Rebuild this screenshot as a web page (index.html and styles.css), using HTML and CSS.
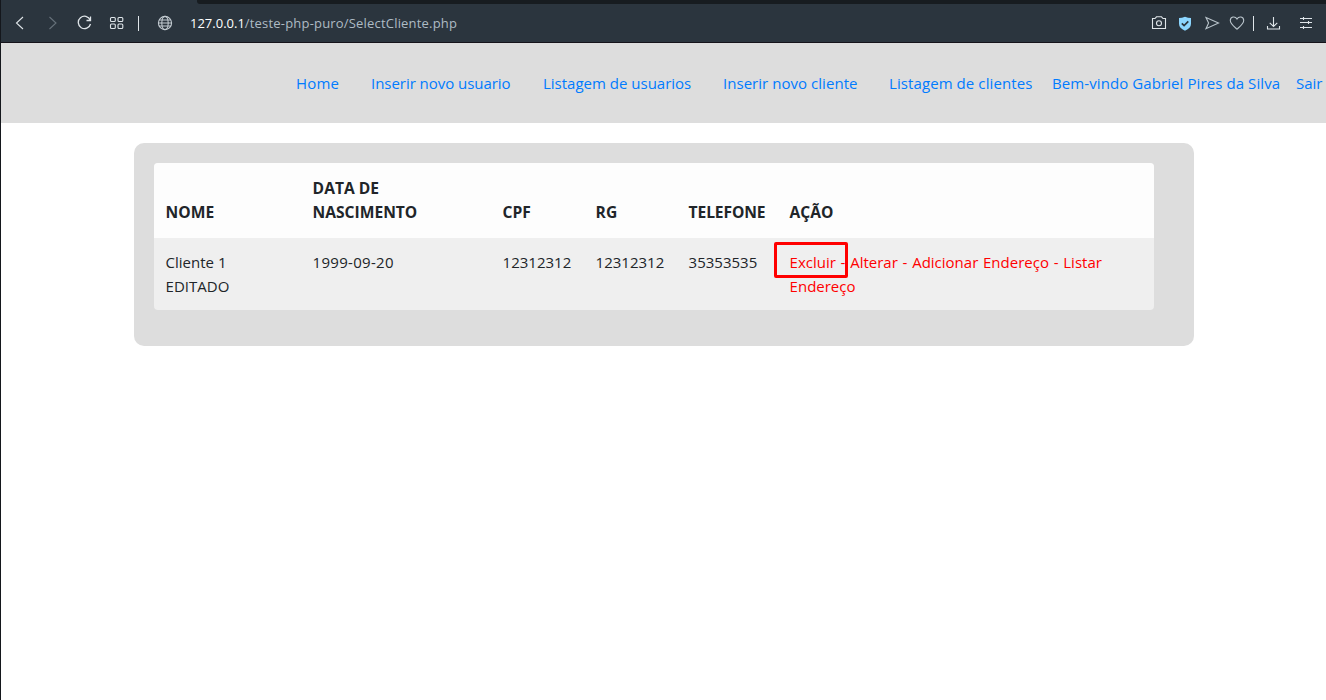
FILE: index.html
```html
<!DOCTYPE html>
<html lang="pt-BR">
<head>
<meta charset="utf-8">
<title>Listagem de clientes</title>
<link rel="stylesheet" href="styles.css">
</head>
<body>
<div class="window">
  <header class="browser">
    <div class="tabstrip"></div>
    <div class="toolbar">
      <div class="controls">
        <svg class="icon" viewBox="0 0 16 16"><path d="M11 2 4.500 8l6.500 6"/></svg>
        <svg class="icon dim" viewBox="0 0 16 16"><path d="m5.500 2 6.500 6-6.500 6"/></svg>
        <svg class="icon reload" viewBox="0 0 16 16"><path d="M14.200 5A6.200 6.200 0 1 0 14.500 9M14.500 1.500v4h-4"/></svg>
        <svg class="icon" viewBox="0 0 16 16"><rect x="2.500" y="2.500" width="4.800" height="4" rx="1"/><rect x="10" y="2.500" width="4.800" height="4" rx="1"/><rect x="2.500" y="9" width="4.800" height="4.500" rx="1"/><rect x="10" y="9" width="4.800" height="4.500" rx="1"/></svg>
      </div>
      <span class="divider"></span>
      <svg class="icon globe" viewBox="0 0 16 16"><circle cx="8" cy="8" r="6.600"/><ellipse cx="8" cy="8" rx="3.200" ry="6.600"/><path d="M2.200 5h11.600M2.200 11h11.600M1.400 8h13.200"/></svg>
      <div class="url"><span class="host">127.0.0.1</span><span class="path">/teste-php-puro/SelectCliente.php</span></div>
      <div class="actions">
        <svg class="icon camera" viewBox="0 0 16 16"><path d="M1.500 3.500H4L5.500 1.800h5L12 3.500h2.500v10h-13z"/><circle cx="8" cy="8.300" r="2.500"/></svg>
        <svg class="icon shield" viewBox="0 0 16 16"><path class="shield-body" d="M8 1.800Q11 3 14 3V8.800Q14 13.200 8 15.800Q2 13.200 2 8.800V3Q5 3 8 1.800Z"/><path class="check" d="m4.800 8.300 2.300 2.300 4.200-4.200"/></svg>
        <svg class="icon soft send" viewBox="0 0 16 16"><path d="M2 2.500 14.500 8 2 13.700 4.600 8z"/></svg>
        <svg class="icon soft heart" viewBox="0 0 16 16"><path d="M8 14.200C6 12.300 1.300 9 1.300 5.600c0-3.900 4.700-5 6.700-1.500 2-3.500 6.700-2.400 6.700 1.500 0 3.400-4.700 6.700-6.700 8.600Z"/></svg>
        <span class="divider"></span>
        <svg class="icon download" viewBox="0 0 16 16"><path d="M7.500 2v9.200M3.700 7.800l3.800 3.600 3.800-3.600M1.500 11v3h12v-3"/></svg>
        <svg class="icon settings" viewBox="0 0 16 16"><path d="M2 3.500h12M2 7.500h12M2 12.500h12M5.500 2v3M10.500 6v3M5.500 11v3"/></svg>
      </div>
    </div>
  </header>
  <nav class="menu">
    <a class="menu-home">Home</a>
    <a class="menu-new-user">Inserir novo usuario</a>
    <a class="menu-users">Listagem de usuarios</a>
    <a class="menu-new-client">Inserir novo cliente</a>
    <a class="menu-clients">Listagem de clientes</a>
    <a class="menu-welcome">Bem-vindo Gabriel Pires da Silva</a>
    <a class="menu-exit">Sair</a>
  </nav>
  <main class="card">
    <table class="clients">
      <colgroup><col class="c-name"><col class="c-birth"><col class="c-doc"><col class="c-doc"><col class="c-phone"><col class="c-action"></colgroup>
      <thead>
        <tr><th>NOME</th><th>DATA DE<br>NASCIMENTO</th><th>CPF</th><th>RG</th><th class="phone">TELEFONE</th><th>AÇÃO</th></tr>
      </thead>
      <tbody>
        <tr>
          <td>Cliente 1<br>EDITADO</td><td class="date">1999-09-20</td><td>12312312</td><td>12312312</td><td>35353535</td>
          <td class="links"><span class="marked"><a>Excluir</a> -<span class="marker"></span></span> <a>Alterar</a> - <a>Adicionar Endereço</a> - <a>Listar<br>Endereço</a></td>
        </tr>
      </tbody>
    </table>
  </main>
</div>
</body>
</html>
```
FILE: styles.css
```css
* { box-sizing: border-box; }
body {
  margin: 0;
  background: #fff;
  color: #212529;
  font: 400 15px/24px "Open Sans", "Noto Sans", sans-serif;
}
.window { min-height: 700px; border-left: 1px solid #14171c; }

.browser { height: 43px; background: #2b353e; border-bottom: 1px solid #15131a; }
.tabstrip { height: 4px; margin-left: 196px; background: #171c20; border-bottom-left-radius: 3px; }
.toolbar { display: flex; align-items: center; height: 38px; }
.icon { flex: none; width: 16px; height: 16px; fill: none; stroke: #dfe5e9; stroke-width: 1.1; }
.dim { stroke: #66717a; }
.reload { stroke-width: 1.3; }
.soft { stroke: #b9c4cb; }
.controls { display: flex; gap: 16px; padding-left: 11px; }
.divider { flex: none; width: 1px; height: 15px; background: #dfe5e9; }
.controls + .divider { margin-left: 14px; }
.globe { margin-left: 18px; stroke: #c3cbd1; }
.url { margin-left: 17px; font-size: 13px; white-space: nowrap; }
.host { color: #fff; }
.path { color: #aebbc4; letter-spacing: .19px; }
.actions { display: flex; align-items: center; margin-left: auto; padding-right: 12px; }
.shield { margin-left: 10px; }
.shield-body { fill: #8cd6ff; stroke: none; }
.check { stroke: #2b353e; stroke-width: 1.700; }
.send { margin-left: 11px; }
.heart { margin-left: 9px; }
.actions .divider { margin-left: 8px; }
.download { margin-left: 12px; }
.settings { margin-left: 16px; }

.menu {
  display: grid;
  grid-template-columns: 75px 172px 180px 166px 163px 244px 30px;
  align-items: center;
  height: 80px;
  padding-left: 295px;
  background: #ddd;
  color: #007bff;
  white-space: nowrap;
  overflow: hidden;
}
.menu-home { letter-spacing: .2px; }
.menu-new-user { letter-spacing: -.04px; }
.menu-new-client { letter-spacing: .04px; }
.menu-clients, .menu-welcome { letter-spacing: .09px; }

.card { width: 1060px; height: 203px; margin: 20px 0 0 133px; padding: 20px; background: #ddd; border-radius: 10px; }
.clients { width: 1000px; table-layout: fixed; border-collapse: separate; border-spacing: 0; background: #efefef; border-radius: 4px; overflow: hidden; }
.c-name { width: 147px; }
.c-birth { width: 190px; }
.c-doc { width: 93px; }
.c-phone { width: 101px; }
.c-action { width: 376px; }
.clients th { padding: 13px 0 14px 11.600px; background: #fdfdfd; text-align: left; vertical-align: bottom; font-size: 15.600px; font-weight: 700; white-space: nowrap; }
.clients th.phone { letter-spacing: -.1px; }
.clients td { padding: 12px 0 12px 11.600px; vertical-align: top; white-space: nowrap; }
.clients td.date { letter-spacing: .3px; }
.clients td.links { color: red; word-spacing: .85px; }
.marked { position: relative; }
.marker { position: absolute; left: -15.600px; top: -10px; width: 74px; height: 36px; border: 3px solid red; border-radius: 2px; }
```
